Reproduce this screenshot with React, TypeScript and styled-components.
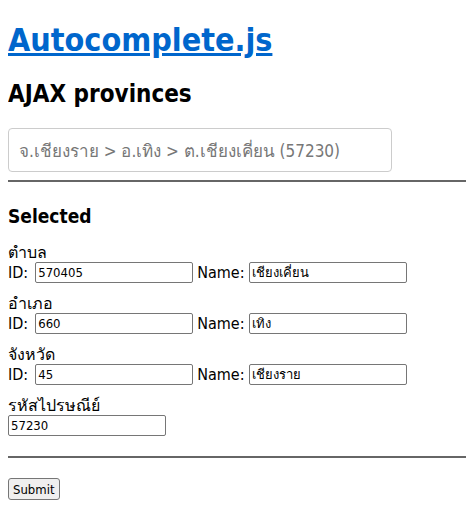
import React from 'react'
import styled, { createGlobalStyle } from 'styled-components'

const GlobalStyle = createGlobalStyle`
  body {
    margin: 8px 0 8px 8px;
    font-family: "DejaVu Sans Condensed", "DejaVu Sans", "Noto Sans", sans-serif;
    font-size: 16px;
    color: #000;
    background: #fff;
  }
`

const Title = styled.h1`
  font-size: 32px;
  margin: 13px 0 21px;
  a {
    color: #0066cc;
    text-decoration: underline;
  }
`

const Subtitle = styled.h2`
  font-size: 24px;
  margin: 20px 0;
`

const Search = styled.input`
  display: block;
  box-sizing: border-box;
  width: 384px;
  height: 44px;
  padding: 0 10px;
  border: 1px solid #cccccc;
  border-radius: 4px;
  font-family: inherit;
  font-size: 17px;
  color: #777777;
  outline: none;
`

const Rule = styled.hr`
  border: none;
  border-top: 2px solid #666666;
  margin: 8px 0 0;
`

const Section = styled.h3`
  font-size: 19px;
  margin: 23px 0 17px;
`

const Group = styled.div`
  margin-bottom: 12px;
`

const Label = styled.div`
  line-height: 18px;
`

const Row = styled.div`
  display: flex;
  align-items: center;
`

const Caption = styled.span<{ $before?: number; $after?: number }>`
  margin-left: ${(p) => p.$before ?? 0}px;
  margin-right: ${(p) => p.$after ?? 0}px;
`

const Field = styled.input<{ $w?: number }>`
  box-sizing: border-box;
  width: ${(p) => p.$w ?? 158}px;
  height: 21px;
  padding: 1px 2px;
  border: 1px solid #767676;
  border-radius: 2px;
  font-family: inherit;
  font-size: 13px;
  color: #000;
`

const Footer = styled.div`
  margin-top: 20px;
`

const Submit = styled.button`
  font-family: inherit;
  font-size: 13px;
  padding: 1px 4px;
  height: 22px;
  border: 1px solid #767676;
  border-radius: 3px;
  background: #efefef;
  color: #000;
`

const groups = [
  { label: 'ตำบล', id: '570405', name: 'เชียงเคี่ยน' },
  { label: 'อำเภอ', id: '660', name: 'เทิง' },
  { label: 'จังหวัด', id: '45', name: 'เชียงราย' },
]

export default function App() {
  return (
    <>
      <GlobalStyle />
      <Title>
        <a href="#">Autocomplete.js</a>
      </Title>
      <Subtitle>AJAX provinces</Subtitle>
      <Search defaultValue="จ.เชียงราย > อ.เทิง > ต.เชียงเคี่ยน (57230)" />
      <Rule />
      <Section>Selected</Section>
      {groups.map((g) => (
        <Group key={g.label}>
          <Label>{g.label}</Label>
          <Row>
            <Caption $after={7}>ID:</Caption>
            <Field defaultValue={g.id} />
            <Caption $before={4} $after={4}>
              Name:
            </Caption>
            <Field defaultValue={g.name} />
          </Row>
        </Group>
      ))}
      <Group>
        <Label>รหัสไปรษณีย์</Label>
        <Field defaultValue="57230" />
      </Group>
      <Footer>
        <Rule />
      </Footer>
      <Footer>
        <Submit>Submit</Submit>
      </Footer>
    </>
  )
}
